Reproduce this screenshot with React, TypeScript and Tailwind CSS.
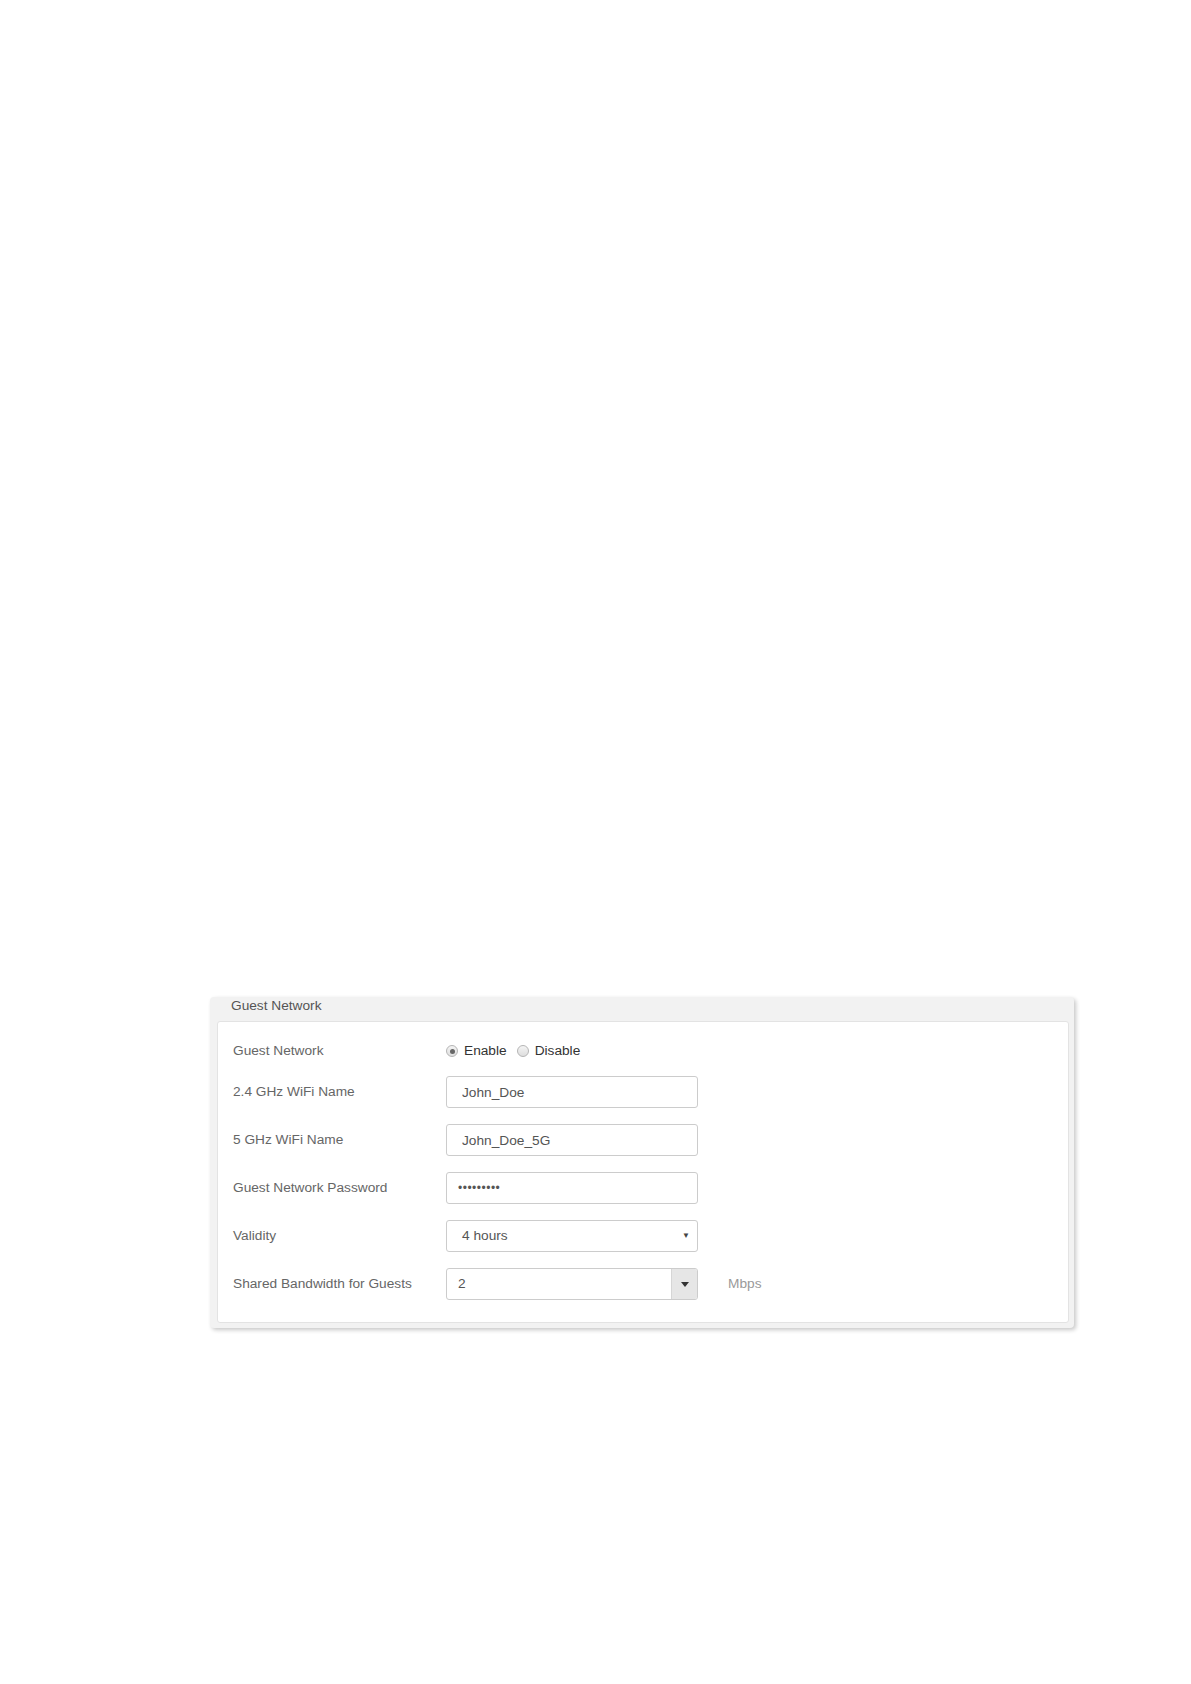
import React from "react";

const labelCls = "w-[213px] shrink-0 text-[#666]";
const inputCls =
  "h-[32px] w-[252px] rounded-[3px] border border-[#cccccc] bg-white text-[#555] outline-none";

function Radio({ checked, label }: { checked?: boolean; label: string }) {
  return (
    <label className="flex items-center gap-[6px] text-[#333]">
      <span className="flex h-[12px] w-[12px] items-center justify-center rounded-full border border-[#b5b5b5] bg-gradient-to-b from-[#f4f4f4] to-[#dedede]">
        {checked && <span className="h-[5px] w-[5px] rounded-full bg-[#666]" />}
      </span>
      {label}
    </label>
  );
}

function Row({ label, children }: { label: string; children: React.ReactNode }) {
  return (
    <div className="flex h-[32px] items-center">
      <span className={labelCls}>{label}</span>
      {children}
    </div>
  );
}

export default function App() {
  return (
    <div
      className="min-h-[1684px] bg-white pl-[210px] pt-[997px] text-[13.7px]"
      style={{ fontFamily: '"Liberation Sans", Arial, sans-serif' }}
    >
      <section className="w-[864px] rounded-[4px] bg-[#f2f2f2] pb-[5px] pl-[7px] pr-[5px] shadow-[2px_2px_4px_rgba(0,0,0,0.22)]">
        <h2 className="h-[24px] pl-[14px] leading-[18px] text-[#555]">Guest Network</h2>
        <div className="rounded-[3px] border border-[#e3e3e3] bg-white pb-[22px] pl-[15px] pt-[19px]">
          <div className="flex h-[20px] items-center">
            <span className={labelCls}>Guest Network</span>
            <div className="flex items-center gap-[10px]">
              <Radio checked label="Enable" />
              <Radio label="Disable" />
            </div>
          </div>

          <div className="mt-[15px] flex flex-col gap-[16px]">
            <Row label="2.4 GHz WiFi Name">
              <input className={`${inputCls} pl-[15px]`} defaultValue="John_Doe" />
            </Row>
            <Row label="5 GHz WiFi Name">
              <input className={`${inputCls} pl-[15px]`} defaultValue="John_Doe_5G" />
            </Row>
            <Row label="Guest Network Password">
              <div className={`${inputCls} flex items-center pl-[11px] text-[12px] tracking-[0.5px] text-[#444]`}>
                •••••••••
              </div>
            </Row>
            <Row label="Validity">
              <div className={`${inputCls} flex items-center justify-between pl-[15px] pr-[7px]`}>
                <span>4 hours</span>
                <span className="text-[8px] text-[#444]">▼</span>
              </div>
            </Row>
            <Row label="Shared Bandwidth for Guests">
              <div className={`${inputCls} flex items-stretch overflow-hidden`}>
                <span className="flex flex-1 items-center pl-[11px]">2</span>
                <span className="flex w-[26px] items-center justify-center border-l border-[#d6d6d6] bg-[#e6e6e6]">
                  <svg width="8" height="5" viewBox="0 0 8 5">
                    <path d="M0 0h8L4 5z" fill="#333" />
                  </svg>
                </span>
              </div>
              <span className="ml-[30px] text-[#999]">Mbps</span>
            </Row>
          </div>
        </div>
      </section>
    </div>
  );
}
